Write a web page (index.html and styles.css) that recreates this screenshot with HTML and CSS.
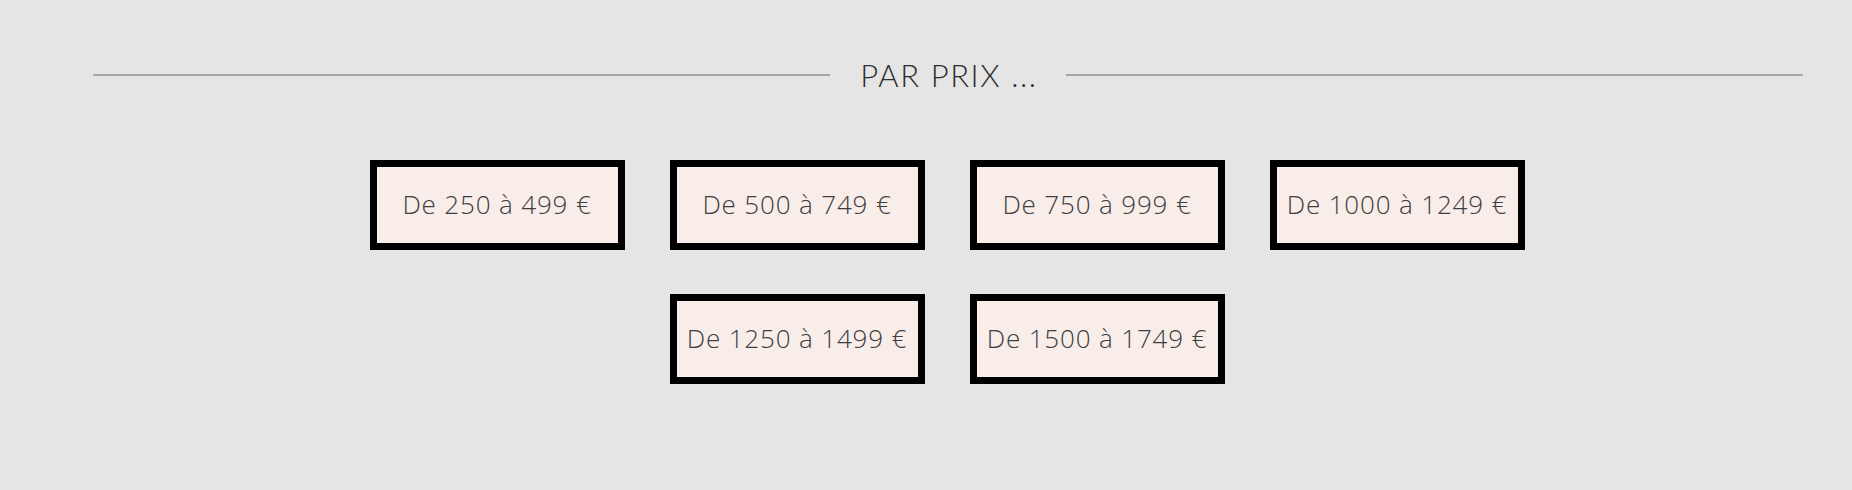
FILE: index.html
```html
<!DOCTYPE html>
<html lang="fr">
<head>
<meta charset="utf-8">
<title>Par prix</title>
<link rel="stylesheet" href="styles.css">
</head>
<body>
<section class="section">
  <div class="title-row">
    <span class="rule"></span>
    <h2 class="title">PAR PRIX ...</h2>
    <span class="rule"></span>
  </div>
  <div class="grid">
    <a class="price-box" href="#">De 250 à 499 €</a>
    <a class="price-box" href="#">De 500 à 749 €</a>
    <a class="price-box" href="#">De 750 à 999 €</a>
    <a class="price-box" href="#">De 1000 à 1249 €</a>
    <a class="price-box" href="#">De 1250 à 1499 €</a>
    <a class="price-box" href="#">De 1500 à 1749 €</a>
  </div>
</section>
</body>
</html>
```
FILE: styles.css
```css
html, body {
  margin: 0;
  padding: 0;
  background: #e5e5e5;
}
body {
  font-family: "Open Sans", "Liberation Sans", sans-serif;
  height: 490px;
  overflow: hidden;
}
.section {
  padding: 56px 49px 0 93px;
}
.title-row {
  display: flex;
  align-items: center;
  height: 38px;
}
.rule {
  flex: 1;
  height: 2px;
  background: #a6a6a6;
}
.title {
  margin: 0 28px 0 30px;
  font-family: "Lato", "Liberation Sans", sans-serif;
  font-weight: 300;
  font-size: 31px;
  letter-spacing: 1.6px;
  color: #2e2e2e;
  line-height: 38px;
}
.grid {
  display: flex;
  flex-wrap: wrap;
  justify-content: center;
  gap: 44px 45px;
  margin-top: 66px;
  padding: 0 271px 0 269px;
}
.price-box {
  box-sizing: border-box;
  width: 255px;
  height: 90px;
  border: 7px solid #000;
  background: #f8ede9;
  display: flex;
  align-items: center;
  justify-content: center;
  color: #3e3e3e;
  text-decoration: none;
  font-weight: 300;
  font-size: 26px;
  letter-spacing: 0.85px;
  padding-bottom: 2px;
}
```
